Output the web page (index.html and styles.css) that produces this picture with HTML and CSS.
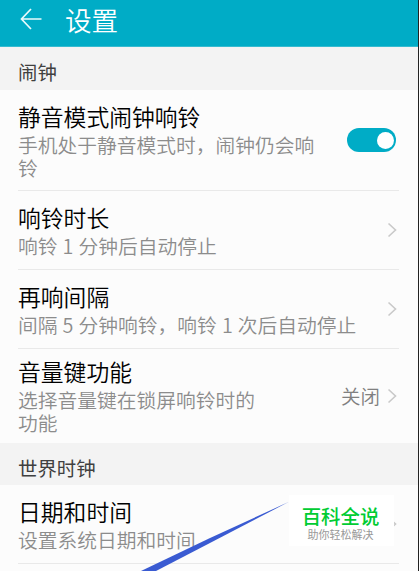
FILE: index.html
```html
<!DOCTYPE html>
<html lang="zh-CN">
<head>
    <meta charset="UTF-8">
    <meta name="viewport" content="width=device-width, initial-scale=1.0">
    <title>设置</title>
    <link rel="stylesheet" href="styles.css">
</head>
<body>
    <div class="screen">
        <header class="header">
            <svg class="back" width="22" height="22" viewBox="0 0 22 22">
                <path d="M11 1 L1.5 11 L11 21 M1.5 11 H21.5"/>
            </svg>
            <h1>设置</h1>
        </header>

        <h2 class="section-title">闹钟</h2>
        <div class="row row-silent">
            <div class="text">
                <h3>静音模式闹钟响铃</h3>
                <p>手机处于静音模式时，闹钟仍会响铃</p>
            </div>
            <div class="switch"><span class="knob"></span></div>
        </div>
        <div class="row">
            <div class="text">
                <h3>响铃时长</h3>
                <p>响铃 1 分钟后自动停止</p>
            </div>
            <svg class="arrow" width="10" height="16" viewBox="0 0 10 16"><path d="M1.5 1.5 L8.5 8 L1.5 14.5"/></svg>
        </div>
        <div class="row">
            <div class="text">
                <h3>再响间隔</h3>
                <p>间隔 5 分钟响铃，响铃 1 次后自动停止</p>
            </div>
            <svg class="arrow" width="10" height="16" viewBox="0 0 10 16"><path d="M1.5 1.5 L8.5 8 L1.5 14.5"/></svg>
        </div>
        <div class="row row-volume">
            <div class="text">
                <h3>音量键功能</h3>
                <p>选择音量键在锁屏响铃时的功能</p>
            </div>
            <span class="value">关闭</span>
            <svg class="arrow" width="10" height="16" viewBox="0 0 10 16"><path d="M1.5 1.5 L8.5 8 L1.5 14.5"/></svg>
        </div>

        <h2 class="section-title section-world">世界时钟</h2>
        <div class="row row-date">
            <div class="text">
                <h3>日期和时间</h3>
                <p>设置系统日期和时间</p>
            </div>
            <svg class="arrow" width="10" height="16" viewBox="0 0 10 16"><path d="M1.5 1.5 L8.5 8 L1.5 14.5"/></svg>
        </div>

        <!-- pointer line and brand badge lie over the list -->
        <svg class="pointer" width="150" height="70" viewBox="0 0 150 70">
            <path d="M1 70 L69 37.5 L149 0.8 L69 42.5 L16 70 Z"/>
        </svg>
        <div class="badge">
            <strong>百科全说</strong>
            <span>助你轻松解决</span>
        </div>
    </div>
</body>
</html>
```

FILE: styles.css
```css
* {
    box-sizing: border-box;
}
body {
    margin: 0;
    font-family: "Noto Sans CJK SC", sans-serif;
    background: #fcfcfc;
}
h1, h2, h3, p {
    margin: 0;
    font-weight: 400;
}
.screen {
    position: relative;
    height: 571px;
    overflow: hidden;
    border-right: 1px solid #222;
}
.header {
    display: flex;
    align-items: center;
    gap: 23px;
    height: 47px;
    padding: 0 0 8px 20px;
    background: #00acc6;
    border-bottom: 1px solid #35bbd0;
    color: #fff;
}
.header h1 {
    padding-top: 2px;
    font-size: 26.6px;
    font-weight: 350;
    line-height: 36px;
}
.back, .arrow, .pointer {
    display: block;
    flex: none;
}
.back path {
    fill: none;
    stroke: #e9fafc;
    stroke-width: 1.7;
}
.section-title {
    height: 43px;
    padding: 3px 18px 0;
    background: #f3f3f3;
    color: #404040;
    font-size: 19.4px;
    line-height: 43px;
}
.section-world {
    height: 42px;
    padding-top: 3px;
}
.row {
    display: flex;
    align-items: center;
    height: 79px;
    margin: 0 19px 0 18px;
    border-bottom: 1px solid #e9e9e9;
}
.text {
    flex: 1;
    align-self: flex-start;
    padding-top: 10px;
}
.text h3 {
    color: #000;
    font-size: 22.8px;
    font-weight: 350;
    line-height: 33px;
}
.text p {
    color: #8c8c8c;
    font-size: 19.75px;
    font-weight: 350;
    line-height: 23px;
    white-space: nowrap;
    word-spacing: 0.7px;
}
.row-silent {
    height: 101px;
}
.row-silent p {
    width: 300px;
    white-space: normal;
}
.row-volume {
    height: 94px;
    border-bottom: 0;
}
.row-volume .text {
    padding-top: 6px;
}
.row-volume p {
    width: 240px;
    white-space: normal;
}
.row-date .text {
    padding-top: 10px;
}
.arrow {
    margin-right: 2px;
}
.arrow path {
    fill: none;
    stroke: #c9c9c9;
    stroke-width: 1.6;
}
.value {
    margin-right: 7px;
    color: #808080;
    font-size: 19.5px;
    font-weight: 350;
    line-height: 24px;
    padding-bottom: 1px;
}
.switch {
    display: flex;
    align-items: center;
    justify-content: flex-end;
    width: 49px;
    height: 24px;
    margin: 0 3px 0 0;
    padding-right: 2px;
    border-radius: 12px;
    background: #00acc6;
}
.knob {
    width: 17px;
    height: 17px;
    border-radius: 50%;
    background: #fff;
}
.pointer {
    position: absolute;
    left: 140px;
    top: 501px;
}
.pointer path {
    fill: #3a5bd2;
}
.badge {
    position: absolute;
    left: 289px;
    top: 495px;
    display: flex;
    flex-direction: column;
    align-items: center;
    width: 105px;
    height: 51px;
    padding: 7px 2px 0 0;
    background: #fff;
}
.badge strong {
    color: #00cc33;
    font-size: 19.4px;
    font-weight: 500;
    line-height: 27px;
}
.badge span {
    color: #999;
    font-size: 11px;
    line-height: 11px;
}
```
